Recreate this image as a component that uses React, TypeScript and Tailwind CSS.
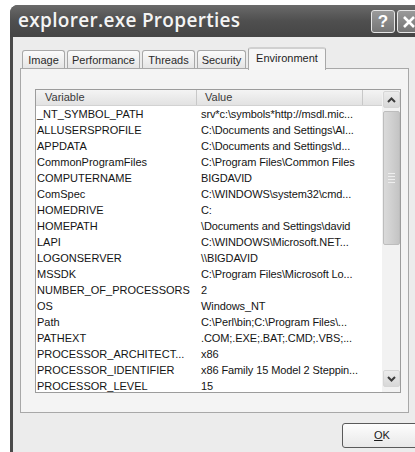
import { FC } from "react";

type EnvVar = [string, string];

const vars: EnvVar[] = [
	["_NT_SYMBOL_PATH", "srv*c:\\symbols*http://msdl.mic..."],
	["ALLUSERSPROFILE", "C:\\Documents and Settings\\Al..."],
	["APPDATA", "C:\\Documents and Settings\\d..."],
	["CommonProgramFiles", "C:\\Program Files\\Common Files"],
	["COMPUTERNAME", "BIGDAVID"],
	["ComSpec", "C:\\WINDOWS\\system32\\cmd..."],
	["HOMEDRIVE", "C:"],
	["HOMEPATH", "\\Documents and Settings\\david"],
	["LAPI", "C:\\WINDOWS\\Microsoft.NET..."],
	["LOGONSERVER", "\\\\BIGDAVID"],
	["MSSDK", "C:\\Program Files\\Microsoft Lo..."],
	["NUMBER_OF_PROCESSORS", "2"],
	["OS", "Windows_NT"],
	["Path", "C:\\Perl\\bin;C:\\Program Files\\..."],
	["PATHEXT", ".COM;.EXE;.BAT;.CMD;.VBS;..."],
	["PROCESSOR_ARCHITECT...", "x86"],
	["PROCESSOR_IDENTIFIER", "x86 Family 15 Model 2 Steppin..."],
	["PROCESSOR_LEVEL", "15"],
];

const tabs = [
	{ label: "Image", w: "w-[43px]" },
	{ label: "Performance", w: "w-[73px]" },
	{ label: "Threads", w: "w-[53px]" },
	{ label: "Security", w: "w-[49px]" },
];

const Chevron: FC<{ down?: boolean }> = ({ down }) => (
	<svg width="9" height="6" viewBox="0 0 9 6" className={down ? "rotate-180" : ""}>
		<path d="M1 5 L4.5 1.5 L8 5" fill="none" stroke="#3c3c3c" strokeWidth="2" />
	</svg>
);

const CaptionButton: FC<{ children: React.ReactNode }> = ({ children }) => (
	<div className="w-[24px] h-[23px] rounded-[3px] border border-[#e6e6e6] bg-gradient-to-b from-[#9a9a9a] to-[#767676] flex items-center justify-center text-white">
		{children}
	</div>
);

const App: FC = () => {
	return (
		<div
			className="w-[415px] h-[452px] bg-white overflow-hidden"
			style={{ fontFamily: '"Liberation Sans", Arial, sans-serif' }}
		>
			<div className="ml-[10px] mt-[5px] w-[420px] h-[460px] rounded-tl-[8px] bg-[#4a4a4a] flex flex-col">
				{/* caption */}
				<div className="h-[32px] shrink-0 rounded-tl-[8px] bg-gradient-to-b from-[#6a6a6a] via-[#4f4f4f] to-[#454545] flex items-center pl-[8px]">
					<span
						className="text-[#f4f4f4] text-[19px] font-semibold tracking-[0.3px] -mt-[1px]"
						style={{ fontFamily: '"Open Sans", "DejaVu Sans", sans-serif' }}
					>
						explorer.exe Properties
					</span>
					<div className="ml-auto mr-[9px] flex gap-[2px] pt-[1px]">
						<CaptionButton>
							<span className="text-[17px] font-bold leading-none">?</span>
						</CaptionButton>
						<CaptionButton>
							<svg width="14" height="14" viewBox="0 0 14 14">
								<path d="M2 2 L12 12 M12 2 L2 12" stroke="#fff" strokeWidth="2.6" />
							</svg>
						</CaptionButton>
					</div>
				</div>

				{/* body */}
				<div className="flex-1 ml-[3px] bg-[#ececec] flex flex-col">
					{/* tab strip */}
					<div className="h-[31px] flex items-end pl-[9px] gap-[2px]">
						{tabs.map((t) => (
							<div
								key={t.label}
								className={`${t.w} h-[19px] -mb-[1px] border border-b-0 border-[#a8a8a8] rounded-t-[3px] bg-gradient-to-b from-[#fbfbfb] to-[#e4e4e4] text-[11px] text-[#2a2a2a] flex items-center justify-center`}
							>
								{t.label}
							</div>
						))}
						<div className="w-[78px] h-[23px] -mb-[2px] border border-b-0 border-[#a8a8a8] rounded-t-[3px] bg-[#f6f6f6] border-t-2 border-t-[#d0d0d0] text-[11px] text-[#1e1e1e] flex items-start justify-center pt-[1px] relative z-10">
							Environment
						</div>
					</div>

					{/* tab page */}
					<div className="ml-[7px] w-[389px] h-[345px] border border-[#a8a8a8] bg-[#f4f4f4] pt-[20px] pl-[14px]">
						<div className="w-[366px] h-[304px] border border-[#9c9c9c] bg-white flex overflow-hidden">
							<div className="w-[346px] flex flex-col">
								<div className="h-[16px] shrink-0 flex bg-gradient-to-b from-[#f4f4f4] to-[#e2e2e2] border-b border-[#d2d2d2] text-[11px] text-[#3a3a3a]">
									<div className="w-[161px] pl-[9px] flex items-center border-r border-[#c8c8c8]">
										Variable
									</div>
									<div className="w-[166px] pl-[8px] flex items-center border-r border-[#c8c8c8]">
										Value
									</div>
									<div className="flex-1" />
								</div>
								{vars.map(([name, value]) => (
									<div
										key={name}
										className="h-[16px] shrink-0 flex items-center text-[11px] text-[#141414] whitespace-nowrap"
									>
										<div className="w-[161px] pl-[1px]">{name}</div>
										<div className="pl-[4px] tracking-[-0.1px]">{value}</div>
									</div>
								))}
							</div>

							{/* vertical scrollbar */}
							<div className="w-[18px] bg-[#f2f2f2] flex flex-col items-center pt-[1px]">
								<div className="w-[17px] h-[17px] rounded-[2px] border border-[#d6d6d6] bg-gradient-to-b from-[#ececec] to-[#d8d8d8] flex items-center justify-center">
									<Chevron />
								</div>
								<div className="mt-[3px] w-[17px] h-[134px] rounded-[2px] border border-[#bdbdbd] bg-gradient-to-r from-[#dadada] via-[#d0d0d0] to-[#c4c4c4] flex flex-col items-center justify-center gap-[2px]">
									<div className="w-[7px] h-px bg-[#eeeeee]" />
									<div className="w-[7px] h-px bg-[#eeeeee]" />
									<div className="w-[7px] h-px bg-[#eeeeee]" />
									<div className="w-[7px] h-px bg-[#eeeeee]" />
								</div>
								<div className="flex-1" />
								<div className="mb-[5px] w-[17px] h-[17px] rounded-[2px] border border-[#d6d6d6] bg-gradient-to-b from-[#ececec] to-[#d8d8d8] flex items-center justify-center">
									<Chevron down />
								</div>
							</div>
						</div>
					</div>

					{/* dialog buttons */}
					<div className="pl-[329px] pt-[10px]">
						<div className="w-[80px] h-[25px] rounded-[3px] border border-[#5a5a5a] bg-gradient-to-b from-[#fdfdfd] to-[#e8e8e8] flex items-center justify-center text-[11px] text-[#1a1a1a]">
							<span>
								<span className="underline">O</span>K
							</span>
						</div>
					</div>
				</div>
			</div>
		</div>
	);
};

export default App;
